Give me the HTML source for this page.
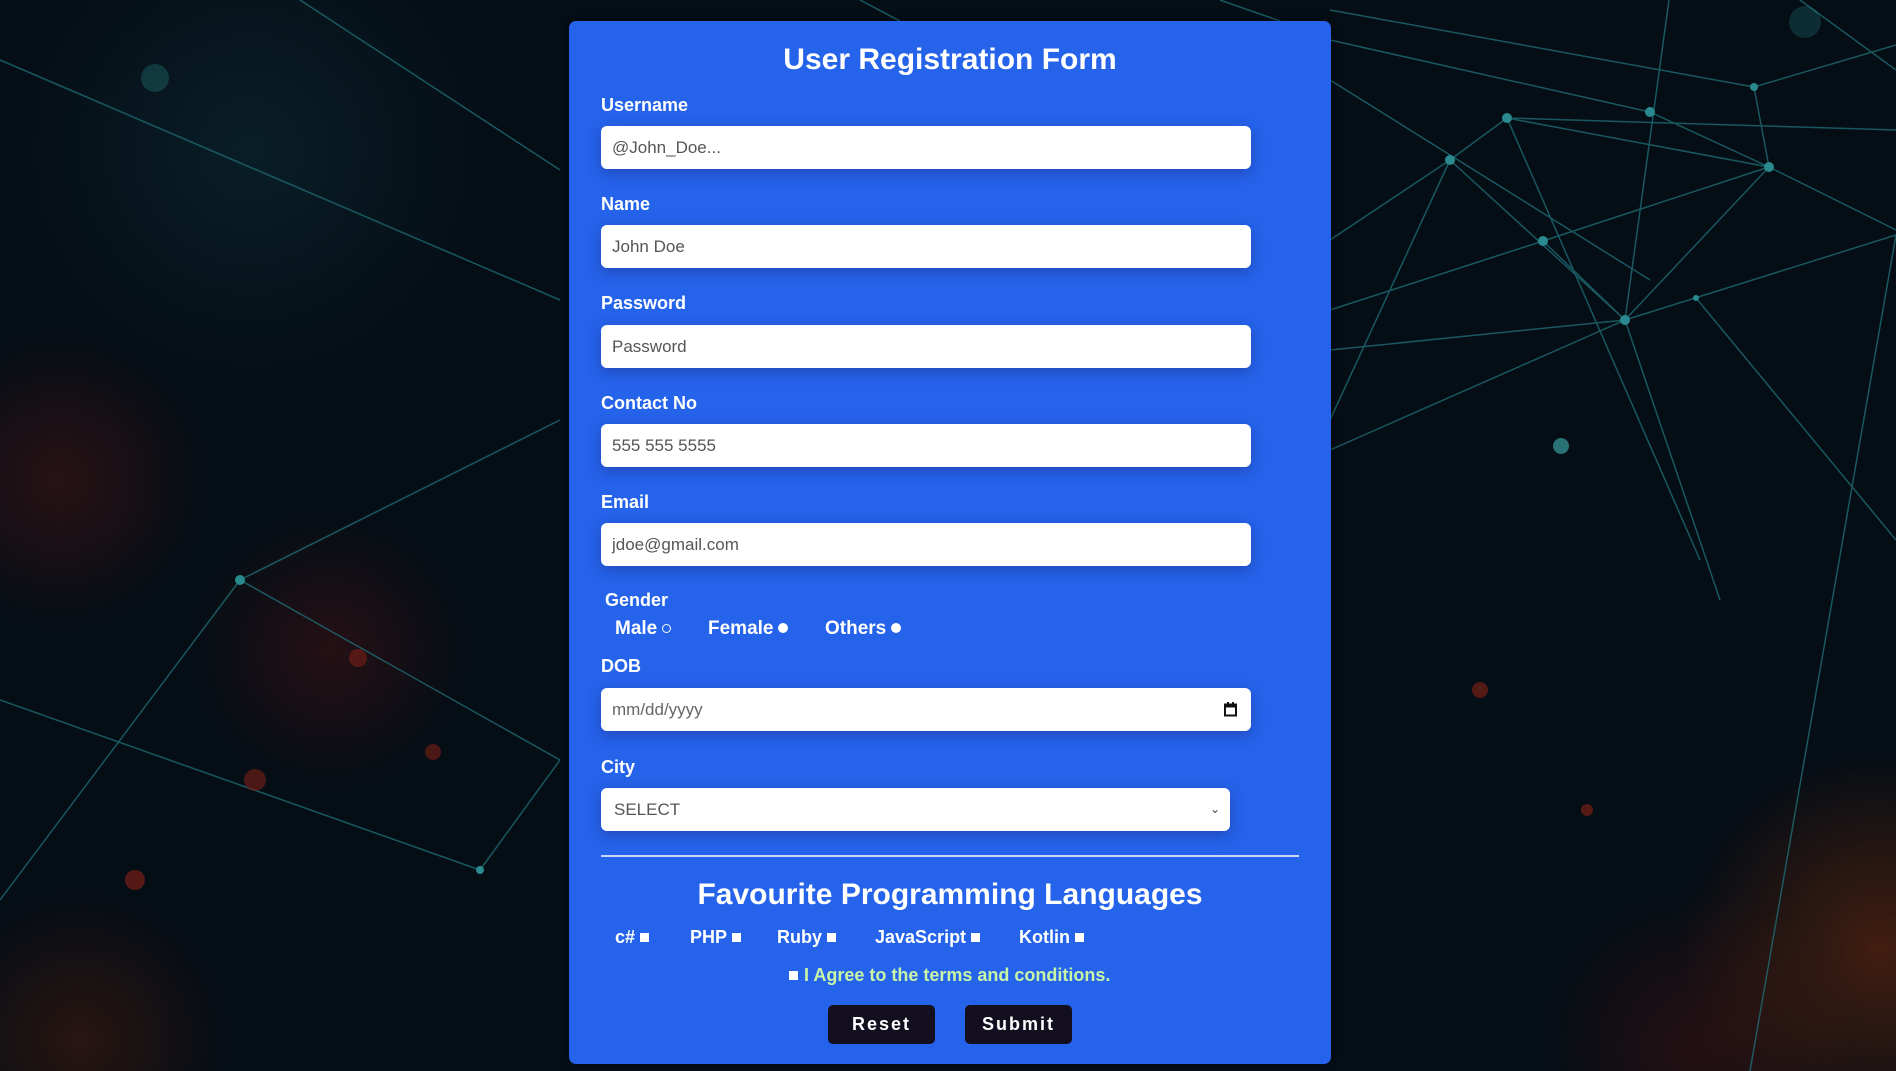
<!DOCTYPE html>
<html><head><meta charset="utf-8"><style>
*{margin:0;padding:0;box-sizing:border-box}
body{width:1896px;height:1071px;overflow:hidden;position:relative;font-family:"Liberation Sans",sans-serif;
background:
radial-gradient(circle at 60px 480px,rgba(120,30,20,.3),transparent 150px),
radial-gradient(circle at 330px 650px,rgba(110,25,20,.3),transparent 140px),
radial-gradient(circle at 1880px 950px,rgba(140,50,10,.45),transparent 200px),
radial-gradient(circle at 1700px 1050px,rgba(110,25,15,.3),transparent 160px),
radial-gradient(circle at 80px 1040px,rgba(120,40,10,.3),transparent 150px),
radial-gradient(circle at 250px 150px,rgba(20,70,80,.3),transparent 250px),
#050d15;}
.card{position:absolute;left:569px;top:21px;width:762px;height:1043px;background:#2563eb;border-radius:7px;box-shadow:0 0 6px rgba(0,0,0,.5)}
.t{position:absolute;color:#fff;font-weight:bold;white-space:nowrap;line-height:1.15}
.lab{font-size:18px;left:32px}
.in{position:absolute;left:32px;width:650px;height:43px;background:#fff;border-radius:6px;box-shadow:0 4px 14px rgba(30,40,120,.45);color:#555;font-size:17px;padding-left:11px;line-height:43px}
.btn{position:absolute;top:984px;width:107px;height:39px;background:#130f1f;border-radius:5px;color:#fff;font-weight:bold;font-size:18px;letter-spacing:2px;text-align:center;line-height:39px}
.sq{display:inline-block;width:9px;height:9px;background:#fff;margin-left:5px;vertical-align:1px}
.dot{display:inline-block;width:10px;height:10px;background:#fff;border-radius:50%;margin-left:5px;vertical-align:1px}
</style></head><body>
<svg width="1896" height="1071" style="position:absolute;left:0;top:0" stroke="#1f6b73" stroke-width="1.5" fill="#2a8a8f">
<g opacity=".8">
<line x1="1330" y1="10" x2="1754" y2="87"/><line x1="1330" y1="40" x2="1650" y2="112"/><line x1="1507" y1="118" x2="1896" y2="130"/>
<line x1="1650" y1="112" x2="1769" y2="167"/><line x1="1754" y1="87" x2="1896" y2="45"/><line x1="1754" y1="87" x2="1769" y2="167"/>
<line x1="1669" y1="0" x2="1625" y2="320"/><line x1="1507" y1="118" x2="1450" y2="160"/><line x1="1450" y1="160" x2="1330" y2="240"/>
<line x1="1507" y1="118" x2="1769" y2="167"/><line x1="1769" y1="167" x2="1543" y2="241"/><line x1="1543" y1="241" x2="1330" y2="310"/>
<line x1="1769" y1="167" x2="1625" y2="320"/><line x1="1450" y1="160" x2="1625" y2="320"/><line x1="1543" y1="241" x2="1625" y2="320"/>
<line x1="1625" y1="320" x2="1896" y2="235"/><line x1="1625" y1="320" x2="1330" y2="350"/><line x1="1625" y1="320" x2="1720" y2="600"/>
<line x1="1507" y1="118" x2="1700" y2="560"/><line x1="1769" y1="167" x2="1896" y2="230"/><line x1="1896" y1="235" x2="1750" y2="1071"/>
<line x1="1330" y1="450" x2="1625" y2="320"/><line x1="1696" y1="298" x2="1896" y2="540"/><line x1="1330" y1="80" x2="1650" y2="280"/>
<line x1="1800" y1="0" x2="1896" y2="70"/><line x1="1450" y1="160" x2="1330" y2="420"/>
<line x1="0" y1="60" x2="560" y2="300"/><line x1="240" y1="580" x2="560" y2="760"/><line x1="240" y1="580" x2="0" y2="900"/>
<line x1="240" y1="580" x2="560" y2="420"/><line x1="480" y1="870" x2="560" y2="760"/><line x1="0" y1="700" x2="480" y2="870"/>
<line x1="300" y1="0" x2="560" y2="170"/><line x1="860" y1="0" x2="900" y2="21"/><line x1="1220" y1="0" x2="1280" y2="21"/>
</g>
<g stroke="none">
<circle cx="1507" cy="118" r="5"/><circle cx="1650" cy="112" r="5"/><circle cx="1754" cy="87" r="4"/><circle cx="1769" cy="167" r="5"/>
<circle cx="1450" cy="160" r="5"/><circle cx="1543" cy="241" r="5"/><circle cx="1625" cy="320" r="5"/><circle cx="1696" cy="298" r="3"/>
<circle cx="1561" cy="446" r="8" fill="#3a9ca0" opacity=".7"/><circle cx="240" cy="580" r="5"/><circle cx="480" cy="870" r="4"/>
<circle cx="155" cy="78" r="14" opacity=".3"/><circle cx="1805" cy="22" r="16" opacity=".25"/>
<circle cx="1480" cy="690" r="8" fill="#8a2218" opacity=".6"/><circle cx="1587" cy="810" r="6" fill="#8a2218" opacity=".6"/>
<circle cx="135" cy="880" r="10" fill="#8a2218" opacity=".6"/><circle cx="255" cy="780" r="11" fill="#7a2018" opacity=".6"/>
<circle cx="358" cy="658" r="9" fill="#7a2018" opacity=".6"/><circle cx="433" cy="752" r="8" fill="#7a2018" opacity=".6"/>
</g></svg>
<div class="card">
<div class="t" style="left:0;width:762px;text-align:center;top:22px;font-size:30px">User Registration Form</div>
<div class="t lab" style="top:74px">Username</div><div class="in" style="top:105px">@John_Doe...</div>
<div class="t lab" style="top:173px">Name</div><div class="in" style="top:204px">John Doe</div>
<div class="t lab" style="top:272px">Password</div><div class="in" style="top:304px">Password</div>
<div class="t lab" style="top:372px">Contact No</div><div class="in" style="top:403px">555 555 5555</div>
<div class="t lab" style="top:471px">Email</div><div class="in" style="top:502px">jdoe@gmail.com</div>
<div class="t lab" style="top:569px;left:36px;font-size:18px">Gender</div>
<div class="t" style="top:597px;left:46px;font-size:19px">Male<span class="dot" style="background:none;border:1.5px solid #fff;width:9px;height:9px"></span></div>
<div class="t" style="top:597px;left:139px;font-size:19px">Female<span class="dot"></span></div>
<div class="t" style="top:597px;left:256px;font-size:19px">Others<span class="dot"></span></div>
<div class="t lab" style="top:635px">DOB</div>
<div class="in" style="top:667px;color:#666">mm/dd/yyyy<svg style="position:absolute;right:14px;top:14px" width="13" height="15" viewBox="0 0 13 15"><rect x="1" y="2.5" width="11" height="11" fill="none" stroke="#111" stroke-width="2"/><rect x="1" y="2.5" width="11" height="3" fill="#111"/><rect x="3" y="0" width="2" height="3" fill="#111"/><rect x="8" y="0" width="2" height="3" fill="#111"/></svg></div>
<div class="t lab" style="top:736px">City</div>
<div class="in" style="top:767px;width:629px;padding-left:13px;color:#555">SELECT<span style="position:absolute;right:10px;top:0;font-size:12px;color:#444">&#8964;</span></div>
<div style="position:absolute;left:32px;top:834px;width:698px;height:2px;background:#c8d8f8"></div>
<div class="t" style="left:0;width:762px;text-align:center;top:857px;font-size:30px">Favourite Programming Languages</div>
<div class="t" style="top:906px;left:46px;font-size:18px">c#<span class="sq"></span></div>
<div class="t" style="top:906px;left:121px;font-size:18px">PHP<span class="sq"></span></div>
<div class="t" style="top:906px;left:208px;font-size:18px">Ruby<span class="sq"></span></div>
<div class="t" style="top:906px;left:306px;font-size:18px">JavaScript<span class="sq"></span></div>
<div class="t" style="top:906px;left:450px;font-size:18px">Kotlin<span class="sq"></span></div>
<div class="t" style="top:944px;left:220px;font-size:18px;color:#c9f5a6"><span class="sq" style="margin:0 6px 0 0"></span>I Agree to the terms and conditions.</div>
<div class="btn" style="left:259px">Reset</div>
<div class="btn" style="left:396px">Submit</div>
</div>
</body></html>
